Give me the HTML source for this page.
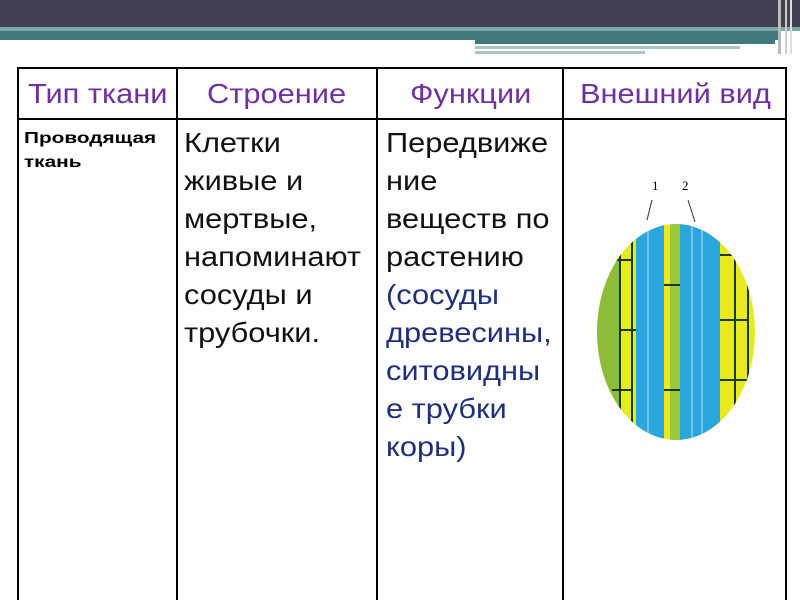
<!DOCTYPE html><html><head><meta charset="utf-8"><style>
body{margin:0;width:800px;height:600px;overflow:hidden;background:#fff;font-family:"Liberation Sans",sans-serif;position:relative}
.a{position:absolute}
.t{position:absolute;font-size:28px;line-height:38px;color:#111;transform:scaleX(1.1);transform-origin:0 0;white-space:nowrap}
.h{position:absolute;top:78px;font-size:28px;line-height:32px;color:#7030a0;transform:scaleX(1.1);transform-origin:0 0;white-space:nowrap}
</style></head><body>
<div class="a" style="left:0;top:0;width:800px;height:27px;background:#414152"></div>
<div class="a" style="left:0;top:27px;width:800px;height:4px;background:#7fa8ab"></div>
<div class="a" style="left:0;top:31px;width:780px;height:9px;background:#41797d"></div>
<div class="a" style="left:475px;top:40px;width:300px;height:4px;background:#41797d"></div>
<div class="a" style="left:475px;top:46px;width:265px;height:3px;background:#a9c5c7"></div>
<div class="a" style="left:475px;top:51px;width:170px;height:3px;background:#a9c5c7"></div>
<div class="a" style="left:778px;top:0;width:3px;height:54px;background:#bbb"></div>
<div class="a" style="left:785px;top:0;width:2px;height:54px;background:#ccc"></div>
<div class="a" style="left:790px;top:0;width:2px;height:54px;background:#ddd"></div>
<svg class="a" style="left:0;top:0" width="800" height="600">
<g stroke="#000" stroke-width="2">
<line x1="17" y1="68" x2="787" y2="68"/>
<line x1="18" y1="119" x2="786" y2="119"/>
<line x1="18" y1="68" x2="18" y2="600"/>
<line x1="786" y1="68" x2="786" y2="600"/>
<line x1="177" y1="68" x2="177" y2="600"/>
<line x1="377" y1="68" x2="377" y2="600"/>
<line x1="563" y1="68" x2="563" y2="600"/>
</g>
<defs><clipPath id="c"><ellipse cx="676" cy="332" rx="79" ry="108"/></clipPath></defs>
<g clip-path="url(#c)">
<rect x="590" y="220" width="180" height="230" fill="#e8ea20"/>
<rect x="595" y="220" width="25" height="230" fill="#8dbb3a"/>
<rect x="636" y="220" width="28" height="230" fill="#2aa6dc"/>
<rect x="670" y="220" width="10" height="230" fill="#9cc73a"/>
<rect x="680" y="220" width="40" height="230" fill="#2aa6dc"/>
<g stroke="#1a3a10" stroke-width="2">
<line x1="620" y1="220" x2="620" y2="450"/><line x1="632" y1="220" x2="632" y2="450"/>
<line x1="735" y1="220" x2="735" y2="450"/><line x1="748" y1="220" x2="748" y2="450"/>
<line x1="612" y1="260" x2="632" y2="260"/><line x1="620" y1="330" x2="636" y2="330"/><line x1="612" y1="390" x2="632" y2="390"/>
<line x1="720" y1="255" x2="748" y2="255"/><line x1="720" y1="320" x2="748" y2="320"/><line x1="720" y1="380" x2="748" y2="380"/>
<line x1="664" y1="285" x2="680" y2="285"/><line x1="664" y1="390" x2="680" y2="390"/>
</g>
<g stroke="#b9e3f3" stroke-width="1"><line x1="648" y1="220" x2="648" y2="450"/><line x1="692" y1="220" x2="692" y2="450"/><line x1="702" y1="220" x2="702" y2="450"/></g>
</g>
<text x="652" y="190" font-family="Liberation Serif" font-size="13">1</text>
<text x="682" y="190" font-family="Liberation Serif" font-size="13">2</text>
<line x1="652" y1="200" x2="647" y2="220" stroke="#333"/><line x1="688" y1="200" x2="695" y2="222" stroke="#333"/>
</svg>
<div class="h" style="left:28px">Тип ткани</div>
<div class="h" style="left:207px">Строение</div>
<div class="h" style="left:410px">Функции</div>
<div class="h" style="left:580px">Внешний вид</div>
<div class="a" style="left:24px;top:127px;font-size:16px;font-weight:bold;line-height:24px;transform:scaleX(1.3);transform-origin:0 0;white-space:nowrap">Проводящая<br>ткань</div>
<div class="t" style="left:184px;top:124px">Клетки<br>живые и<br>мертвые,<br>напоминают<br>сосуды и<br>трубочки.</div>
<div class="t" style="left:386px;top:124px">Передвиже<br>ние<br>веществ по<br>растению<br><span style="color:#1f2f7a">(сосуды<br>древесины,<br>ситовидны<br>е трубки<br>коры)</span></div>
</body></html>
